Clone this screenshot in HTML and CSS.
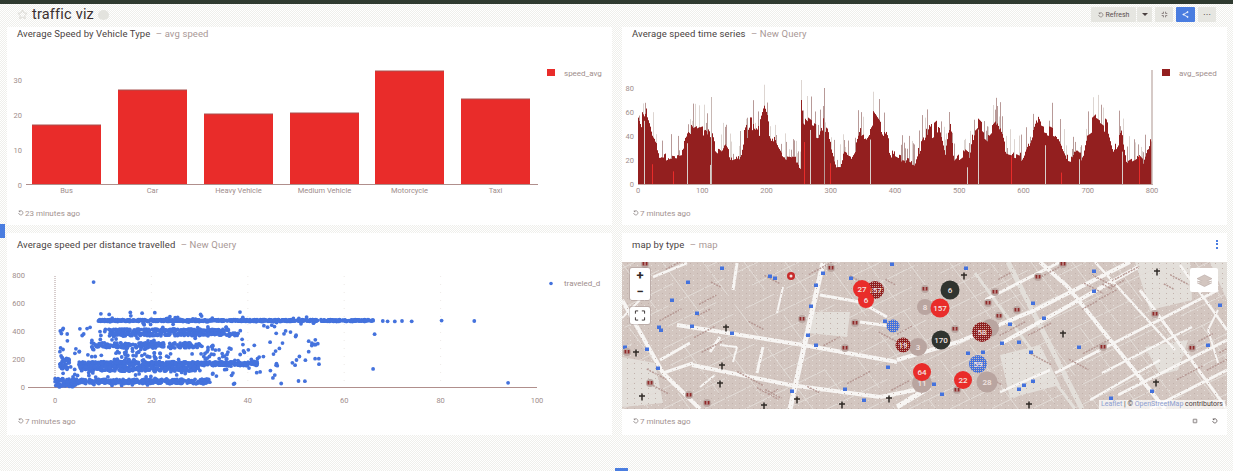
FILE: index.html
```html
<!DOCTYPE html>
<html lang="en">
<head>
    <meta charset="UTF-8">
    <meta name="viewport" content="width=device-width, initial-scale=1.0">
    <title>traffic viz</title>
    <link rel="stylesheet" href="styles.css">
</head>
<body>
    <div class="topbar"></div>
    <div class="side-tab"></div>

    <header class="dash-header">
        <div class="dash-title">
            <svg class="star" viewBox="0 0 12 12"><path d="M6 1l1.5 3.3 3.5.4-2.6 2.4.7 3.5L6 8.900l-3.100 1.700.7-3.500L1 4.700l3.500-.4z"/></svg>
            <h1>traffic viz</h1>
            <span class="badge-blob"></span>
        </div>
        <div class="dash-actions">
            <button class="btn btn-refresh">
                <svg class="clock" viewBox="0 0 10 10"><path d="M2 2.500a3.500 3.500 0 1 1-.8 2.500M2 .8v2h2"/></svg>Refresh
            </button>
            <button class="btn btn-caret"><span class="caret"></span></button>
            <button class="btn btn-icon">
                <svg class="glyph" viewBox="0 0 10 10"><path d="M3.500 1v2.500H1M6.500 1v2.500H9M6.500 9V6.500H9M3.500 9V6.500H1"/></svg>
            </button>
            <button class="btn btn-icon btn-share">
                <svg class="glyph" viewBox="0 0 10 10"><path d="M8 1.500L2 5l6 3.500"/><circle cx="8" cy="1.500" r=".8"/><circle cx="2" cy="5" r=".8"/><circle cx="8" cy="8.500" r=".8"/></svg>
            </button>
            <button class="btn btn-icon btn-more">&#8943;</button>
        </div>
    </header>

    <main class="dash-grid">
        <section class="card">
            <div class="card-title">Average Speed by Vehicle Type <span>&ndash; avg speed</span></div>
            <svg id="bars" class="card-body" viewBox="7 54 605 147"></svg>
            <div class="card-foot">
                <span class="ago"><svg class="clock" viewBox="0 0 10 10"><path d="M2 2.500a3.500 3.500 0 1 1-.8 2.500M2 .8v2h2"/></svg>23 minutes ago</span>
            </div>
        </section>

        <section class="card">
            <div class="card-title">Average speed time series <span>&ndash; New Query</span></div>
            <svg id="series" class="card-body" viewBox="622 54 605 147"></svg>
            <div class="card-foot">
                <span class="ago"><svg class="clock" viewBox="0 0 10 10"><path d="M2 2.500a3.500 3.500 0 1 1-.8 2.500M2 .8v2h2"/></svg>7 minutes ago</span>
            </div>
        </section>

        <section class="card card-low">
            <div class="card-title">Average speed per distance travelled <span>&ndash; New Query</span></div>
            <svg id="scatter" class="card-body" viewBox="7 262 605 147"></svg>
            <div class="card-foot">
                <span class="ago"><svg class="clock" viewBox="0 0 10 10"><path d="M2 2.500a3.500 3.500 0 1 1-.8 2.500M2 .8v2h2"/></svg>7 minutes ago</span>
            </div>
        </section>

        <section class="card card-low">
            <div class="card-title">map by type <span>&ndash; map</span>
                <span class="kebab"><i></i><i></i><i></i></span>
            </div>
            <div class="map">
                <svg id="map" class="card-body" viewBox="622 262 605 147"></svg>
                <div class="zoom-box">
                    <div class="zoom-btn">+</div>
                    <div class="zoom-btn">&minus;</div>
                </div>
                <div class="full-box">
                    <svg class="full-icon" viewBox="0 0 12 12"><path d="M1 4V1h3M8 1h3v3M11 8v3H8M4 11H1V8"/></svg>
                </div>
                <div class="layers-box">
                    <svg class="layers-icon" viewBox="0 0 18 14"><path d="M9 1l8 4-8 4-8-4z"/><path d="M1 7.500l8 4 8-4"/><path d="M1 9.500l8 4 8-4"/></svg>
                </div>
                <div class="attribution"><b>Leaflet</b> | &copy; <b>OpenStreetMap</b> contributors</div>
            </div>
            <div class="card-foot">
                <span class="ago"><svg class="clock" viewBox="0 0 10 10"><path d="M2 2.500a3.500 3.500 0 1 1-.8 2.500M2 .8v2h2"/></svg>7 minutes ago</span>
                <span class="foot-icons">
                    <svg class="glyph-dark" viewBox="0 0 10 10"><path d="M3.500 1v2.500H1M6.500 1v2.500H9M6.500 9V6.500H9M3.500 9V6.500H1"/></svg>
                    <svg class="glyph-dark" viewBox="0 0 10 10"><path d="M2 2.500a3.500 3.500 0 1 1-.8 2.500M2 .8v2h2"/></svg>
                </span>
            </div>
        </section>
    </main>

    <div class="bottom-tab"></div>
    <script src="script.js"></script>
</body>
</html>
```

FILE: styles.css
```css
* {
    box-sizing: border-box;
}
html, body {
    height: 100%;
}
body {
    margin: 0;
    overflow: hidden;
    font-family: Roboto, Arial, sans-serif;
    color: #3a2f2f;
    background: repeating-conic-gradient(#efefeb 0 25%, #fff 0 50%) 0 0 / 2px 2px;
}
.topbar {
    height: 4px;
    background-color: #2f3a30;
}
.side-tab {
    position: absolute;
    left: 0;
    top: 224px;
    width: 5px;
    height: 14px;
    background-color: #4a7de0;
}
.bottom-tab {
    position: absolute;
    left: 615px;
    bottom: 0;
    width: 13px;
    height: 3px;
    background-color: #4a7de0;
}
.dash-header {
    height: 23px;
    padding: 0 17px 2px 17px;
    display: flex;
    align-items: center;
    justify-content: space-between;
}
.dash-title {
    display: flex;
    align-items: center;
    gap: 4px;
}
.dash-title h1 {
    margin: 0;
    font-size: 14.5px;
    font-weight: 400;
    line-height: 20px;
    letter-spacing: 0.2px;
}
.star {
    width: 11px;
    height: 11px;
    fill: none;
    stroke: #d9d8d2;
}
.badge-blob {
    width: 11px;
    height: 10px;
    border-radius: 50%;
    background-color: #e3e3de;
}
.dash-actions {
    display: flex;
    align-items: center;
    gap: 3px;
}
.btn {
    height: 15px;
    padding: 0;
    border: 0;
    border-radius: 1px;
    background-color: #e6e6e1;
    color: #5a5050;
    font-family: Roboto, Arial, sans-serif;
    font-size: 7px;
    display: flex;
    align-items: center;
    justify-content: center;
}
.btn-refresh {
    width: 45px;
    gap: 2px;
    margin-right: -2px;
}
.btn-caret {
    width: 15px;
}
.caret {
    width: 0;
    height: 0;
    border: 3px solid transparent;
    border-top: 3px solid #4a4040;
    border-bottom: 0;
}
.btn-icon {
    width: 18px;
}
.btn-share {
    width: 19px;
    background-color: #4a7de0;
    color: #fff;
}
.btn-share .glyph {
    stroke: #fff;
}
.btn-more {
    font-size: 8px;
}
.glyph {
    width: 7px;
    height: 7px;
    fill: none;
    stroke: #7a7070;
    stroke-width: 1.2;
}
.clock {
    width: 6px;
    height: 6px;
    fill: none;
    stroke: #6a5f5f;
    stroke-width: 1;
}
.dash-grid {
    display: grid;
    grid-template-columns: 605px 605px;
    grid-template-rows: 198px 202px;
    column-gap: 10px;
    row-gap: 8px;
    padding-left: 7px;
}
.card {
    background-color: #fff;
}
.card-title {
    height: 27px;
    padding: 0 10px 14px;
    display: flex;
    align-items: center;
    gap: 3px;
    font-size: 9.5px;
    letter-spacing: 0.1px;
    white-space: pre;
    color: #4a3f3f;
}
.card-title span {
    color: #a99896;
}
.card-low .card-title {
    height: 29px;
    padding-bottom: 7px;
}
.kebab {
    margin-left: auto;
    margin-right: -1px;
    display: flex;
    flex-direction: column;
    gap: 1.500px;
}
.kebab i {
    display: block;
    width: 2px;
    height: 2px;
    background-color: #4a7de0;
}
.card-body {
    display: block;
    width: 605px;
    height: 147px;
}
.card-foot {
    height: 24px;
    padding: 0 10px 0 11px;
    display: flex;
    align-items: center;
    justify-content: space-between;
    font-size: 8px;
    color: #a39391;
}
.ago {
    display: flex;
    align-items: center;
    gap: 1px;
}
.foot-icons {
    display: flex;
    gap: 14px;
    margin-right: -1px;
}
.glyph-dark {
    width: 6px;
    height: 6px;
    fill: none;
    stroke: #4a4040;
    stroke-width: 1.2;
}
.map {
    position: relative;
}
.zoom-box {
    position: absolute;
    left: 8px;
    top: 6px;
    width: 20px;
    height: 32px;
    background-color: #fff;
    border-radius: 2px;
    box-shadow: 0 0 0 1px rgba(120, 100, 100, 0.25);
}
.zoom-btn {
    height: 16px;
    line-height: 15px;
    text-align: center;
    font-size: 13px;
    font-weight: 700;
    color: #2f2828;
}
.full-box {
    position: absolute;
    left: 8px;
    top: 45px;
    width: 20px;
    height: 17px;
    background-color: #fff;
    border-radius: 2px;
    box-shadow: 0 0 0 1px rgba(120, 100, 100, 0.25);
    display: flex;
    align-items: center;
    justify-content: center;
}
.full-icon {
    width: 12px;
    height: 11px;
    fill: none;
    stroke: #2f2828;
    stroke-width: 1;
}
.layers-box {
    position: absolute;
    right: 9px;
    top: 6px;
    width: 28px;
    height: 24px;
    background-color: #fff;
    border-radius: 2px;
    display: flex;
    align-items: center;
    justify-content: center;
}
.layers-icon {
    width: 17px;
    height: 13px;
    fill: #d3c6c0;
    stroke: #b8a9a4;
    stroke-width: 0.7;
}
.attribution {
    position: absolute;
    right: 2px;
    bottom: 0;
    height: 9px;
    padding: 0 2px;
    font-size: 7px;
    line-height: 9px;
    white-space: nowrap;
    color: #4a4040;
    background-color: rgba(255, 255, 255, 0.7);
}
.attribution b {
    font-weight: 400;
    color: #8c9dd0;
}
.tick {
    font-family: Roboto, Arial, sans-serif;
    font-size: 7.5px;
    fill: #a08e8c;
}
.legend {
    font-family: Roboto, Arial, sans-serif;
    font-size: 8px;
    fill: #a08e8c;
}
.cluster-label {
    font-family: Roboto, Arial, sans-serif;
    font-size: 8px;
    font-weight: 500;
    fill: #f3e6e3;
}
```

FILE: script.js
```js
// tiny seeded random so the picture stays the same on every load
let seed = 12345;
function rnd() {
    seed = (seed * 16807) % 2147483647;
    return seed / 2147483647;
}

function line(x1, y1, x2, y2, color, w, extra) {
    return `<line x1="${x1}" y1="${y1}" x2="${x2}" y2="${y2}" stroke="${color}" stroke-width="${w}" ${extra || ''}/>`;
}
function rect(x, y, w, h, color) {
    return `<rect x="${x}" y="${y}" width="${w}" height="${h}" fill="${color}"/>`;
}
function circle(x, y, r, color) {
    return `<circle cx="${x}" cy="${y}" r="${r}" fill="${color}"/>`;
}
function text(x, y, str, cls, anchor) {
    return `<text x="${x}" y="${y}" class="${cls}" text-anchor="${anchor || 'middle'}">${str}</text>`;
}

const AXIS = '#b08f8c';

function drawBars() {
    const bars = [
        ['Bus', 32, 125], ['Car', 118, 90], ['Heavy Vehicle', 204, 114],
        ['Medium Vehicle', 290, 113], ['Motorcycle', 375, 71], ['Taxi', 461, 99]
    ];
    let out = '';
    [[30, 80], [20, 115], [10, 150], [0, 185]].forEach(t => {
        out += text(22, t[1] + 2.5, t[0], 'tick', 'end');
    });
    bars.forEach(b => {
        out += rect(b[1], b[2], 69, 184 - b[2], '#e92c2a');
        out += line(b[1], b[2], b[1] + 69, b[2], '#a8504e', 1);
        out += text(b[1] + 34.5, 193, b[0], 'tick');
    });
    out += line(26, 184.5, 538, 184.5, AXIS, 1);
    out += rect(547, 69, 8, 7, '#e92c2a');
    out += text(564, 75.500, 'speed_avg', 'legend', 'start');
    document.getElementById('bars').innerHTML = out;
}

function drawSeries() {
    // [index, value] outline of the dark area
    const pts = [
        [0, 65], [5, 55], [10, 50], [14, 62], [18, 55], [22, 45], [28, 40], [32, 22], [40, 22], [50, 25],
        [60, 24], [68, 25], [72, 45], [78, 50], [85, 45], [95, 48], [105, 50], [115, 40], [120, 30], [130, 25],
        [135, 32], [140, 28], [145, 20], [155, 22], [160, 25], [165, 40], [175, 52], [185, 42], [195, 60],
        [205, 45], [215, 30], [225, 22], [240, 20], [248, 20], [252, 12], [255, 55], [262, 50], [270, 47],
        [280, 45], [285, 55], [295, 50], [300, 30], [308, 15], [315, 15], [320, 25], [330, 22], [338, 30],
        [345, 42], [355, 45], [365, 55], [375, 48], [385, 40], [395, 25], [405, 22], [420, 20], [430, 18],
        [440, 35], [447, 42], [468, 51], [478, 25], [486, 50], [491, 20], [505, 27], [515, 23], [525, 53],
        [546, 42], [559, 50], [572, 27], [598, 23], [608, 37], [618, 55], [627, 45], [650, 40], [666, 22],
        [676, 20], [681, 28], [692, 23], [700, 47], [713, 53], [729, 47], [739, 27], [752, 41], [760, 18],
        [776, 23], [786, 18], [800, 43]
    ];
    const valueAt = i => {
        let k = 0;
        while (k < pts.length - 2 && pts[k + 1][0] < i) k++;
        const a = pts[k], b = pts[k + 1];
        return a[1] + (b[1] - a[1]) * (i - a[0]) / (b[0] - a[0]);
    };
    const base = 184, sx = 0.6425, sy = 1.2;
    let out = '';
    [0, 20, 40, 60, 80].forEach(t => {
        out += text(634, base - t * sy + 2.500, t, 'tick', 'end');
    });
    let factor = 1, hold = 0;
    for (let px = 0; px < 514; px++) {
        const x = 638.5 + px;
        if (hold-- <= 0) {
            factor = 0.82 + rnd() * 0.32;
            hold = Math.floor(rnd() * 4);
        }
        const top = base - valueAt(px / sx) * factor * sy;
        const roll = rnd();
        if (roll < 0.3) {
            const spike = 5 + rnd() * 22;
            out += line(x, top, x, top - spike, rnd() < 0.55 ? '#b89a98' : '#ddd5d1', 1);
        }
        out += line(x, base, x, top, '#931f1f', 1);
        if (roll > 0.965) {
            const end = Math.min(base, top + rnd() * 30);
            out += line(x, base, x, end, rnd() < 0.6 ? '#d9cfcb' : '#e92c2a', 1);
        }
    }
    // the tall ones that stick out
    out += line(801.5, 184, 801.5, 80, '#ddd5d1', 1);
    out += line(801.5, 184, 801.5, 100, '#931f1f', 1);
    out += line(824.5, 184, 824.5, 88, '#b89a98', 1);
    out += line(711.5, 184, 711.5, 97, '#c8b8b4', 1);
    out += line(1152, 184, 1152, 70, '#c8b8b4', 1.500);
    out += line(638, 184.5, 1153, 184.5, AXIS, 0.8);
    for (let t = 0; t <= 800; t += 100) {
        out += text(638 + t * sx, 193, t, 'tick');
    }
    out += rect(1162, 69, 8, 7, '#931f1f');
    out += text(1179, 75.500, 'avg_speed', 'legend', 'start');
    document.getElementById('series').innerHTML = out;
}

function drawScatter() {
    const X = v => 55 + v * 4.82, Y = v => 387 - v * 0.139;
    let out = '';
    [0, 200, 400, 600, 800].forEach(t => {
        out += text(25, Y(t) + 2.500, t, 'tick', 'end');
    });
    [20, 40, 60, 80].forEach(t => {
        out += line(X(t), 276, X(t), 387, '#e8e5e1', 0.8, 'stroke-dasharray="1 7"');
    });
    out += line(55, 276, 55, 387, '#9a8280', 0.8, 'stroke-dasharray="1 1"');
    out += line(28, 387.5, 537, 387.5, AXIS, 1);
    [0, 20, 40, 60, 80, 100].forEach(t => {
        out += text(X(t), 403, t, 'tick');
    });

    const dot = (x, y) => circle(X(x).toFixed(1), Y(y).toFixed(1), 1.9, '#4472dd');
    // [from x, to x, y, spread, count]
    const bands = [
        [9, 66, 478, 7, 600], [10, 36, 408, 9, 170], [11, 38, 378, 10, 170], [8, 30, 300, 18, 170],
        [5, 42, 168, 14, 420], [5, 30, 132, 18, 260], [4, 32, 40, 16, 300], [0, 4, 30, 30, 60],
        [1, 3, 170, 40, 30], [12, 22, 240, 50, 40], [30, 36, 250, 50, 24]
    ];
    bands.forEach(b => {
        for (let i = 0; i < b[4]; i++) {
            const x = b[0] + (b[1] - b[0]) * rnd();
            out += dot(x, b[2] + (rnd() - 0.5) * b[3] * 2);
        }
    });
    for (let i = 0; i < 260; i++) {
        const x = 1 + Math.pow(rnd(), 1.2) * 54;
        out += dot(x, 10 + rnd() * (x < 8 ? 420 : 530));
    }
    [[8, 755], [66, 130], [66.300, 380], [94, 30], [80.200, 478], [87, 475], [68, 475], [69, 473], [70.500, 472],
     [72, 475], [74, 473]].forEach(p => { out += dot(p[0], p[1]); });
    out += circle(551, 283.500, 1.800, '#4472dd');
    out += text(564, 286, 'traveled_d', 'legend', 'start');
    document.getElementById('scatter').innerHTML = out;
}

function drawMap() {
    const LIGHT = '#e3dfda', WHITE = '#f7f5f3';
    let out = '<defs><pattern id="speck" width="7" height="5" patternUnits="userSpaceOnUse"><rect width="1" height="1" fill="#e6e0dc"/><rect x="4" y="3" width="1" height="1" fill="#c2b2ac"/></pattern>' +
        '<pattern id="hatch" width="2" height="2" patternUnits="userSpaceOnUse"><rect width="2" height="2" fill="#8e1f1f"/><rect width="1" height="1" fill="#c9a09b"/></pattern>' +
        '<pattern id="bluedot" width="2" height="2" patternUnits="userSpaceOnUse"><rect width="2" height="2" fill="#4472dd"/><rect width="1" height="1" fill="#c9b8b4"/></pattern></defs>';
    out += rect(622, 262, 605, 147, '#d3c6c0');

    // parks
    [
        '813,312 850,312 847,337 808,333', '1135,262 1190,262 1192,300 1150,310',
        '1145,347 1188,340 1178,370 1160,375', '622,357 655,363 663,403 622,407',
        '1000,355 1040,345 1060,385 1010,398', '1210,262 1227,262 1227,300'
    ].forEach(p => { out += `<polygon points="${p}" fill="${LIGHT}"/>`; });

    // thin block lines, two directions, broken up a bit
    for (let i = -20; i < 26; i++) {
        const a = 622 + i * 41;
        out += line(a, 409, a + 300, 262, '#e2dcd7', 1, `stroke-dasharray="${30 + rnd() * 60} ${10 + rnd() * 30}"`);
        out += line(a + 40, 262, a + 150, 409, '#e2dcd7', 1, `stroke-dasharray="${30 + rnd() * 50} ${10 + rnd() * 30}"`);
    }

    // main streets [x1, y1, x2, y2, width]
    [
        [1008, 262, 1082, 409, 5], [975, 273, 1075, 409, 3]
    ].forEach(r => { out += line(r[0], r[1], r[2], r[3], LIGHT, r[4]); });
    [
        [677, 325, 803, 345, 4], [803, 345, 897, 362, 4], [897, 360, 958, 342, 4], [958, 342, 1035, 310, 4],
        [1035, 310, 1130, 262, 4], [692, 365, 790, 385, 4], [790, 385, 880, 397, 4], [880, 397, 915, 390, 4],
        [823, 263, 790, 409, 5], [622, 300, 663, 373, 4], [663, 373, 700, 409, 4], [653, 277, 687, 263, 2.500],
        [737, 263, 733, 290, 3], [710, 352, 720, 337, 3], [720, 345, 737, 347, 2], [737, 347, 733, 362, 2],
        [763, 347, 757, 373, 3], [783, 287, 777, 313, 2], [820, 295, 860, 302, 3], [860, 302, 887, 317, 3],
        [897, 407, 930, 387, 5], [663, 373, 693, 363, 3], [660, 360, 690, 343, 3], [700, 387, 715, 375, 2],
        [1002, 343, 1138, 267, 4], [1055, 373, 1218, 290, 3], [1102, 373, 1192, 327, 2.500],
        [1118, 395, 1227, 340, 3], [985, 300, 1060, 262, 3], [1090, 400, 1160, 360, 2.500],
        [1000, 392, 1050, 370, 2.500], [1150, 409, 1227, 370, 3], [1068, 287, 1165, 409, 4],
        [1040, 262, 1068, 287, 4], [1095, 262, 1175, 350, 2.500], [1140, 290, 1227, 409, 3],
        [1180, 265, 1227, 330, 2.500], [1218, 310, 1208, 330, 2], [1208, 330, 1218, 363, 2],
        [622, 318, 640, 300, 2], [860, 322, 890, 326, 3]
    ].forEach(r => { out += line(r[0], r[1], r[2], r[3], WHITE, r[4]); });

    // rotated street name smudges
    for (let i = 0; i < 46; i++) {
        const x = 630 + rnd() * 590, y = 268 + rnd() * 135, len = 10 + rnd() * 22;
        const up = rnd() < 0.6;
        out += line(x, y, x + len * 0.88, y + (up ? -0.47 : 0.47) * len, '#b69994', 1.500, 'stroke-dasharray="2 1"');
    }
    out += rect(622, 262, 605, 147, 'url(#speck)');

    // blue points
    [
        [722, 268], [770, 276], [775, 278], [688, 282], [672, 300], [816, 285], [823, 273], [851, 278], [892, 264],
        [697, 313], [811, 306], [885, 321], [659, 327], [661, 330], [692, 326], [732, 333], [808, 335], [816, 345],
        [625, 347], [647, 349], [658, 368], [888, 367], [845, 389], [792, 391], [864, 400], [966, 268], [1094, 271],
        [1094, 291], [1033, 303], [1044, 318], [1010, 324], [1220, 305], [1002, 343], [1019, 342], [1031, 352],
        [983, 352], [968, 353], [1079, 347], [1208, 345], [1033, 381], [1024, 385], [1019, 389], [934, 384],
        [942, 394], [1111, 398], [1152, 391]
    ].forEach(p => { out += rect(p[0] - 2, p[1] - 1.500, 4, 3.500, '#4472dd'); });

    // dark red icons on a tan disc
    [
        [645, 264], [831, 268], [925, 289], [802, 319], [855, 323], [845, 348], [627, 352], [650, 383], [689, 395],
        [707, 403], [1063, 264], [1038, 277], [995, 292], [988, 303], [1017, 310], [999, 316], [1155, 314],
        [1103, 347], [1192, 348], [955, 329], [957, 390]
    ].forEach(p => {
        out += circle(p[0], p[1], 4, '#bba8a3');
        out += rect(p[0] - 2.500, p[1] - 2, 5, 3.500, '#8e2a2a');
        out += rect(p[0] - 0.500, p[1] - 2, 1, 3.500, '#d9c6c2');
    });
    out += circle(791, 276, 4, '#c72b2b') + circle(791, 276, 1.500, '#f4e4e0');

    // dark crosses
    [
        [726, 328], [636, 353], [722, 366], [720, 384], [642, 397], [764, 406], [797, 400], [842, 405], [889, 399],
        [964, 276], [1063, 334], [1157, 272], [1156, 383], [1029, 405]
    ].forEach(p => {
        out += line(p[0], p[1] - 3.500, p[0], p[1] + 3.500, '#2f2a26', 1.500);
        out += line(p[0] - 3, p[1] - 1, p[0] + 3, p[1] - 1, '#2f2a26', 1.500);
    });

    // clusters [x, y, r, fill, label]
    [
        [875, 290, 9, 'url(#hatch)', '157'], [862, 289, 9, '#e92c2a', '27'], [866, 300, 8, '#e92c2a', '6'],
        [925, 307, 8, '#b9a5a0', '8'], [950, 290, 9.500, '#30342f', '6'], [940, 308, 9.500, '#e92c2a', '157'],
        [918, 347, 9, '#b9a5a0', '3'], [903, 345, 7.500, 'url(#hatch)', '19'], [941, 340, 9.500, '#30342f', '170'],
        [893, 326, 6.500, 'url(#bluedot)', ''], [990, 328, 9, '#b9a5a0', ''], [982, 332, 10, 'url(#hatch)', '58'],
        [922, 383, 10, '#b9a5a0', '11'], [922, 372, 9, '#e92c2a', '64'], [978, 364, 9, 'url(#bluedot)', '59'],
        [987, 382, 10.500, '#b9a5a0', '28'], [963, 380, 9, '#e92c2a', '22']
    ].forEach(c => {
        out += circle(c[0], c[1], c[2], c[3]);
        if (c[4]) out += text(c[0], c[1] + 3, c[4], 'cluster-label');
    });
    document.getElementById('map').innerHTML = out;
}

drawBars();
drawSeries();
drawScatter();
drawMap();
```
